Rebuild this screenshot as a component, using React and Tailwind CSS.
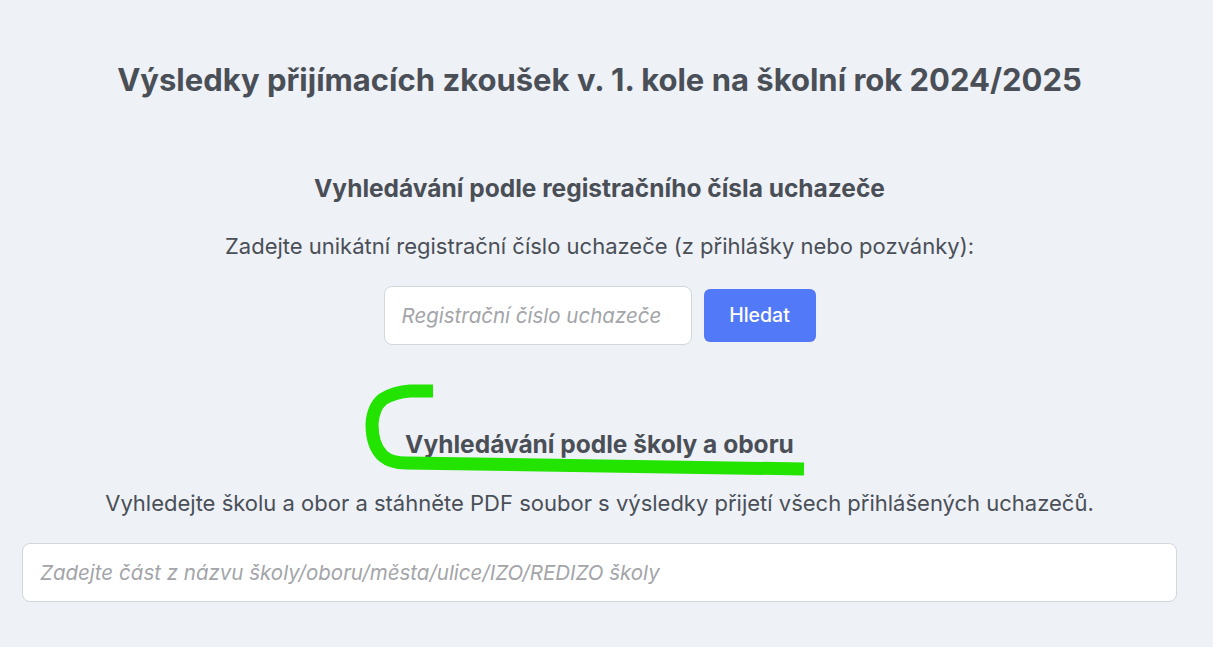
import React from 'react';

const App = () => {
  return (
    <div className="relative min-h-[647px] bg-[#eef1f6] text-[#4a4f57] font-['Inter','Noto_Sans',sans-serif]">
      <div className="flex flex-col items-center pl-[22px] pr-[36px] pt-[60px]">
        <h1 className="text-[31px] font-bold leading-[40px] text-center whitespace-nowrap">
          Výsledky přijímacích zkoušek v. 1. kole na školní rok 2024/2025
        </h1>

        {/* Registration number search */}
        <h2 className="mt-[72px] text-[24.5px] font-bold leading-[32px] whitespace-nowrap">
          Vyhledávání podle registračního čísla uchazeče
        </h2>
        <p className="mt-[27px] text-[22px] leading-[30px] whitespace-nowrap">
          Zadejte unikátní registrační číslo uchazeče (z přihlášky nebo pozvánky):
        </p>
        <div className="mt-[25px] flex items-center gap-3">
          <input
            type="text"
            placeholder="Registrační číslo uchazeče"
            className="w-[308px] h-[59px] rounded-lg border border-[#d3d6dc] bg-white px-[17px] text-[20.5px] italic placeholder:text-[#a3a5a9] outline-none"
          />
          <button className="w-[112px] h-[53px] rounded-md bg-[#5279f8] text-white text-[19.5px] font-medium">
            Hledat
          </button>
        </div>

        {/* School search */}
        <h2 className="mt-[83px] text-[24.5px] font-bold leading-[32px] whitespace-nowrap">
          Vyhledávání podle školy a oboru
        </h2>
        <p className="mt-[28px] text-[22px] leading-[30px] whitespace-nowrap">
          Vyhledejte školu a obor a stáhněte PDF soubor s výsledky přijetí všech přihlášených uchazečů.
        </p>
        <input
          type="text"
          placeholder="Zadejte část z názvu školy/oboru/města/ulice/IZO/REDIZO školy"
          className="mt-[25px] w-full h-[59px] rounded-lg border border-[#d3d6dc] bg-white px-[17px] text-[20.5px] italic placeholder:text-[#a3a5a9] outline-none"
        />
      </div>

      {/* hand-drawn highlight */}
      <svg className="absolute left-0 top-0 pointer-events-none" width="1213" height="647">
        <path
          d="M 433 391 L 410 391 Q 395 392 383 399 Q 373 407 372 424 Q 372 446 383 456 Q 391 463 406 463 L 804 469"
          fill="none"
          stroke="#22e400"
          strokeWidth="13"
          strokeLinejoin="round"
        />
      </svg>
    </div>
  );
};

export default App;
